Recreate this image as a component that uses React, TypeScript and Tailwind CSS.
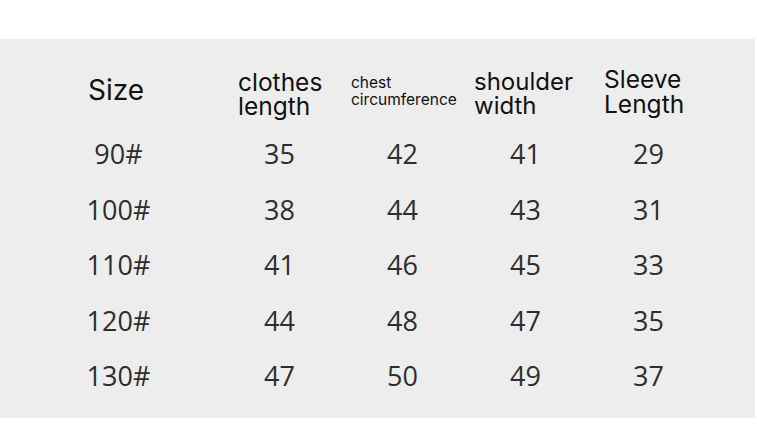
import React from "react";

const rows = [
  ["90#", "35", "42", "41", "29"],
  ["100#", "38", "44", "43", "31"],
  ["110#", "41", "46", "45", "33"],
  ["120#", "44", "48", "47", "35"],
  ["130#", "47", "50", "49", "37"],
];

const head = "font-['Inter','Noto_Sans',sans-serif] text-[#111]";
const num = "font-['Open_Sans','Noto_Sans',sans-serif] text-[#2e2e2e]";

export default function App() {
  return (
    <div className="w-[757px] h-[427px] bg-white pt-[39px]">
      <div className="w-[755px] h-[379px] bg-[#ededed] pl-[19px]">
        {/* header */}
        <div className={`grid grid-cols-[199px_123px_123px_123px_123px] h-[87px] items-start ${head}`}>
          <div className="pt-[37px] pl-[69px] text-[28px] leading-none">Size</div>
          <div className="pt-[31px] pl-[20px] text-[24.5px] leading-[24px]">
            <div>clothes</div>
            <div>length</div>
          </div>
          <div className="pt-[35px] pl-[10px] text-[15.5px] leading-[17px] whitespace-nowrap">
            <div>chest</div>
            <div>circumference</div>
          </div>
          <div className="pt-[31px] pl-[10px] text-[24px] leading-[23.5px]">
            <div>shoulder</div>
            <div>width</div>
          </div>
          <div className="pt-[28px] pl-[17px] text-[24.5px] leading-[25px]">
            <div>Sleeve</div>
            <div>Length</div>
          </div>
        </div>

        {/* body */}
        {rows.map((r) => (
          <div
            key={r[0]}
            className={`grid grid-cols-[199px_123px_123px_123px_123px] h-[55.5px] items-center text-center text-[27px] leading-[55.5px] ${num}`}
          >
            {r.map((c, i) => (
              <div key={i}>{c}</div>
            ))}
          </div>
        ))}
      </div>
    </div>
  );
}
